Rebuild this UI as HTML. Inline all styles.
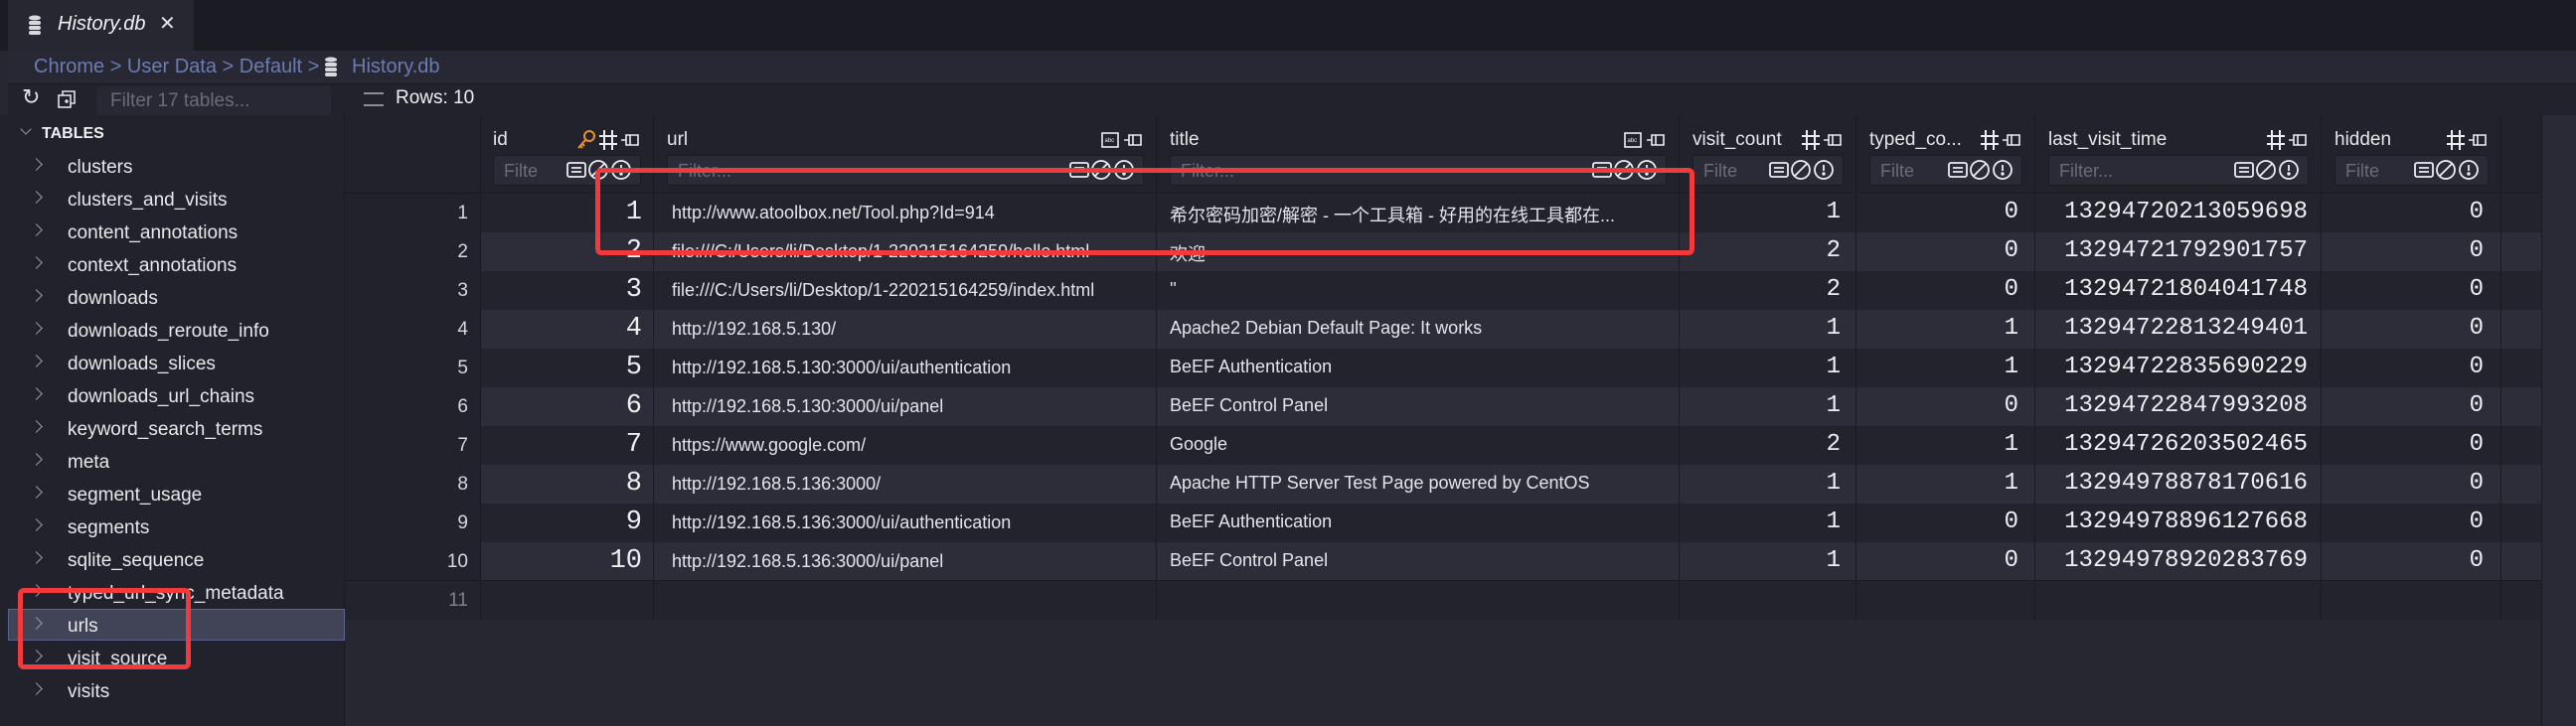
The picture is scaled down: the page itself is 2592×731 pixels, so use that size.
<!DOCTYPE html>
<html><head><meta charset="utf-8"><style>
*{box-sizing:border-box;margin:0;padding:0}
body{width:2592px;height:731px;background:#262731;font-family:"Liberation Sans","Noto Sans CJK SC",sans-serif;color:#e6e6ea;position:relative;overflow:hidden;font-size:19px}
.a{position:absolute}
.side{left:0;top:116px;width:347px;height:615px;background:#21222b;border-right:1px solid #1a1b21}
.it{position:absolute;left:68px;font-size:19px;color:#e8e8ec}
.chev{position:absolute;left:36px;width:9px;height:9px;border-right:1.5px solid #9a9aa5;border-top:1.5px solid #9a9aa5;transform:rotate(45deg)}
.row{position:absolute;left:347px;width:2210px;height:39px}
.rn{position:absolute;left:347px;width:124px;text-align:right;font-size:19px;color:#d8d8de}
.cell{position:absolute;font-size:18px;color:#e4e4ea;white-space:nowrap}
.mono{font-family:"Liberation Mono","DejaVu Sans Mono",monospace;font-size:24px;color:#eeeef2;text-align:right}
.hd{position:absolute;top:130px;font-size:19px;color:#e6e6ea}
.fb{position:absolute;top:156px;height:31px;background:#2a2b36;border:1px solid #1b1c22;border-radius:3px;color:#6b6c78;font-size:18px;padding:5px 0 0 10px}
.vl{position:absolute;top:116px;width:1px;height:508px;background:#1a1b21}
.red{position:absolute;border:5px solid #f23a3c;border-radius:6px}
</style></head><body>
<div class="a" style="left:0;top:0;width:2592px;height:51px;background:#1b1c23"></div>
<div class="a" style="left:8px;top:0;width:187px;height:51px;background:#262731"></div>
<svg class="a" style="left:28px;top:15px" width="14" height="20" viewBox="0 0 14 20"><g fill="#d8d8de"><ellipse cx="7" cy="3" rx="6" ry="2.5"/><rect x="1" y="6" width="12" height="4" rx="2"/><rect x="1" y="11" width="12" height="4" rx="2"/><rect x="1" y="16" width="12" height="4" rx="2"/></g></svg>
<div class="a" style="left:58px;top:13px;font-style:italic;font-size:20px;color:#f0f0f4">History.db</div>
<div class="a" style="left:160px;top:11px;font-size:20px;color:#e0e0e6">✕</div>
<div class="a" style="left:8px;top:51px;width:2584px;height:33px;background:#272833"></div>
<div class="a" style="left:34px;top:56px;font-size:20px;color:#6d7bb3">Chrome &gt; User Data &gt; Default &gt;</div>
<svg class="a" style="left:326px;top:57px" width="14" height="20" viewBox="0 0 14 20"><g fill="#d8d8de"><ellipse cx="7" cy="3" rx="6" ry="2.5"/><rect x="1" y="6" width="12" height="4" rx="2"/><rect x="1" y="11" width="12" height="4" rx="2"/><rect x="1" y="16" width="12" height="4" rx="2"/></g></svg>
<div class="a" style="left:354px;top:56px;font-size:20px;color:#6d7bb3">History.db</div>
<div class="a" style="left:8px;top:84px;width:2584px;height:32px;background:#21222b;border-top:1px solid #1a1b21"></div>
<div class="a" style="left:22px;top:85px;font-size:22px;color:#e0e0e6">↻</div>
<svg class="a" style="left:57px;top:90px" width="20" height="20" viewBox="0 0 20 20" fill="none" stroke="#e0e0e6" stroke-width="1.6"><rect x="2" y="6" width="12" height="12"/><path d="M6 6V2h12v12h-4M8 12h4M10 10v4"/></svg>
<div class="a" style="left:97px;top:87px;width:236px;height:29px;background:#272833;border-radius:3px;color:#6b6c78;font-size:19px;padding:4px 0 0 14px">Filter 17 tables...</div>
<div class="a" style="left:366px;top:93px;width:20px;height:14px;border-top:2px solid #8c8c96;border-bottom:2px solid #8c8c96"></div>
<div class="a" style="left:398px;top:88px;font-size:19px;color:#f0f0f4">Rows: 10</div>
<div class="a side"></div>
<div class="a" style="left:22px;top:126px;width:8px;height:8px;border-right:1.5px solid #9a9aa5;border-bottom:1.5px solid #9a9aa5;transform:rotate(45deg)"></div>
<div class="a" style="left:42px;top:126px;font-size:16px;font-weight:bold;color:#f0f0f4">TABLES</div>
<div class="a" style="left:8px;top:613px;width:339px;height:32px;background:#414457;border:1px solid #5a6290"></div>
<div id="sb"></div>
<div class="a" style="left:347px;top:116px;width:2210px;height:79px;background:#21222b;border-bottom:1px solid #1a1b21"></div>
<div class="a" style="left:2557px;top:116px;width:35px;height:615px;background:#292a35;border-left:1px solid #1a1b21"></div>
<div id="grid"></div>
<div class="red" style="left:599px;top:169px;width:1106px;height:88px"></div>
<div class="red" style="left:18px;top:592px;width:174px;height:82px"></div>
<script>
const tables=["clusters","clusters_and_visits","content_annotations","context_annotations","downloads","downloads_reroute_info","downloads_slices","downloads_url_chains","keyword_search_terms","meta","segment_usage","segments","sqlite_sequence","typed_url_sync_metadata","urls","visit_source","visits"];
let s="";tables.forEach((t,i)=>{const y=158+i*33;s+=`<div class="chev" style="top:${y+3}px;left:32px"></div><div class="it" style="top:${y}px">${t}</div>`});
document.getElementById("sb").innerHTML=s;
const cols=[[483,658,"id"],[658,1164,"url"],[1164,1690,"title"],[1690,1868,"visit_count"],[1868,2048,"typed_co..."],[2048,2336,"last_visit_time"],[2336,2517,"hidden"]];
const rows=[[1,"http://www.atoolbox.net/Tool.php?Id=914","希尔密码加密/解密 - 一个工具箱 - 好用的在线工具都在...",1,0,"13294720213059698"],
[2,"file:///C:/Users/li/Desktop/1-220215164259/hello.html","欢迎",2,0,"13294721792901757"],
[3,"file:///C:/Users/li/Desktop/1-220215164259/index.html","''",2,0,"13294721804041748"],
[4,"http://192.168.5.130/","Apache2 Debian Default Page: It works",1,1,"13294722813249401"],
[5,"http://192.168.5.130:3000/ui/authentication","BeEF Authentication",1,1,"13294722835690229"],
[6,"http://192.168.5.130:3000/ui/panel","BeEF Control Panel",1,0,"13294722847993208"],
[7,"https://www.google.com/","Google",2,1,"13294726203502465"],
[8,"http://192.168.5.136:3000/","Apache HTTP Server Test Page powered by CentOS",1,1,"13294978878170616"],
[9,"http://192.168.5.136:3000/ui/authentication","BeEF Authentication",1,0,"13294978896127668"],
[10,"http://192.168.5.136:3000/ui/panel","BeEF Control Panel",1,0,"13294978920283769"]];
let g="";
rows.forEach((r,i)=>{const y=195+i*39;const bg=i%2?"#2c2d39":"#22232c";
g+=`<div class="row" style="top:${y}px;background:#21222b"></div><div class="a" style="left:483px;top:${y}px;width:2074px;height:39px;background:${bg}"></div>`;
g+=`<div class="rn" style="top:${y+9}px">${r[0]}</div>`;
g+=`<div class="cell mono" style="left:483px;width:163px;top:${y+4}px;font-size:27px">${r[0]}</div>`;
g+=`<div class="cell" style="left:676px;top:${y+9}px">${r[1]}</div>`;
g+=`<div class="cell" style="left:1177px;top:${y+8}px;font-size:18px">${r[2]}</div>`;
g+=`<div class="cell mono" style="left:1690px;width:162px;top:${y+5}px">${r[3]}</div>`;
g+=`<div class="cell mono" style="left:1868px;width:163px;top:${y+5}px">${r[4]}</div>`;
g+=`<div class="cell mono" style="left:2048px;width:274px;top:${y+5}px">${r[5]}</div>`;
g+=`<div class="cell mono" style="left:2336px;width:163px;top:${y+5}px">0</div>`;});
g+=`<div class="a" style="left:347px;top:584px;width:2210px;height:1px;background:#1a1b21"></div><div class="a" style="left:347px;top:585px;width:2210px;height:39px;background:#22232c"></div><div class="rn" style="top:594px;color:#80818c">11</div>`;
const ic=(x,y,num,key)=>{let h="";
if(key)h+=`<svg class="a" style="left:${x-44}px;top:${y}px" width="20" height="22" viewBox="0 0 20 22" fill="none" stroke="#e8912a" stroke-width="2"><circle cx="13" cy="7" r="5"/><path d="M9 11L2 19M4 17l2 2M6 15l2 2"/></svg>`;
h+= num?`<svg class="a" style="left:${x-22}px;top:${y}px" width="20" height="22" viewBox="0 0 20 22" fill="none" stroke="#ececf2" stroke-width="2"><path d="M6 1v20M14 1v20M1 7h18M1 15h18"/></svg>`
:`<svg class="a" style="left:${x-22}px;top:${y+3}px" width="18" height="16" viewBox="0 0 18 16" fill="none" stroke="#ececf2" stroke-width="1.6"><rect x="1" y="1" width="16" height="14"/><text x="3.5" y="10" font-size="6" fill="#ececf2" stroke="none" font-family="Liberation Sans">abc</text></svg>`;
h+=`<svg class="a" style="left:${x}px;top:${y+2}px" width="20" height="18" viewBox="0 0 20 18" fill="none" stroke="#ececf2" stroke-width="1.6"><path d="M1 9h5M6 4h12v10H6zM10 4v10"/></svg>`;return h};
const fic=(x,y)=>`<svg class="a" style="left:${x}px;top:${y}px" width="66" height="22" viewBox="0 0 66 22" fill="none" stroke="#ececf2" stroke-width="1.8"><rect x="1" y="4" width="18" height="14" rx="2"/><path d="M5 9h10M5 13h10"/><circle cx="32" cy="11" r="9"/><path d="M26 17L38 5"/><circle cx="55" cy="11" r="9"/><path d="M55 6v6"/><circle cx="55" cy="15" r="0.8"/></svg>`;
cols.forEach((c,i)=>{const [l,r,n]=c;
g+=`<div class="vl" style="left:${r-1}px"></div>`;
g+=`<div class="hd" style="left:${l+13}px">${n}</div>`;
g+=ic(r-34,130,!(i==1||i==2),i==0);
const wide=(i==1||i==2||i==5);
g+=`<div class="fb" style="left:${l+13}px;width:${r-l-26}px">${wide?"Filter...":"Filte"}</div>`;
g+=fic(r-88,160);});
g+=`<div class="vl" style="left:483px"></div>`;
document.getElementById("grid").innerHTML=g;
</script>
</body></html>
